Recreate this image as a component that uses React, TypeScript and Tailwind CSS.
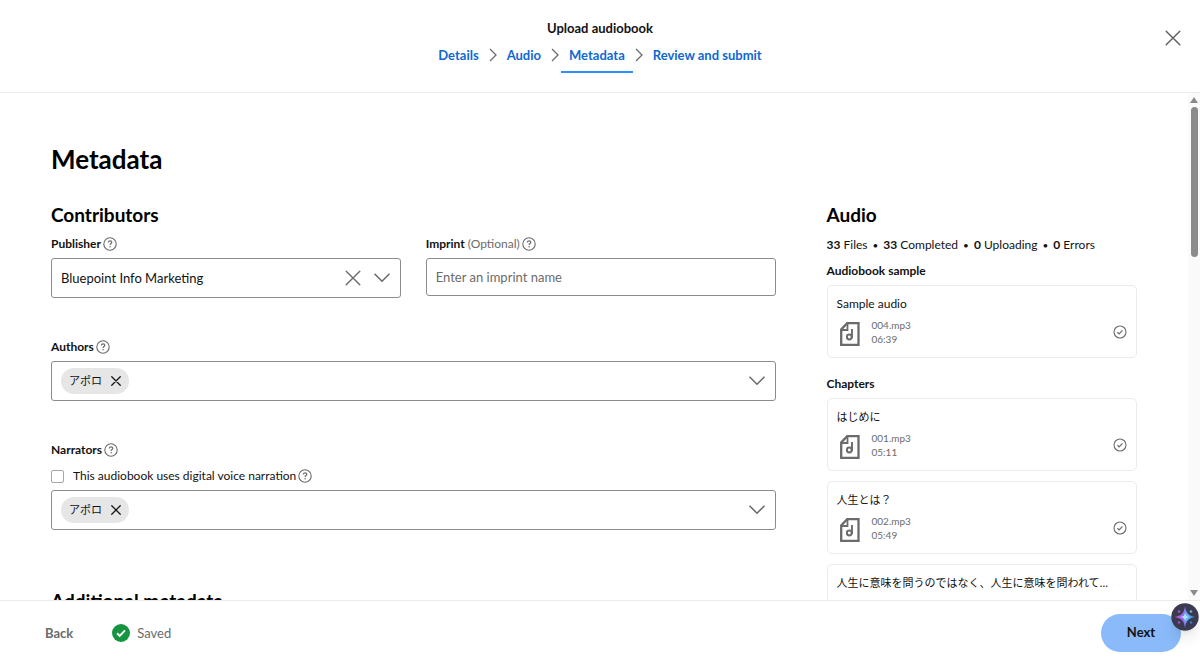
import { useState } from 'react'
import type { ReactNode } from 'react'

type Track = { title: string; file: string; duration: string }

const steps = ['Details', 'Audio', 'Metadata', 'Review and submit']

const stats = [
  { count: 33, label: 'Files' },
  { count: 33, label: 'Completed' },
  { count: 0, label: 'Uploading' },
  { count: 0, label: 'Errors' },
]

const sample: Track = { title: 'Sample audio', file: '004.mp3', duration: '06:39' }

const chapters: Track[] = [
  { title: 'はじめに', file: '001.mp3', duration: '05:11' },
  { title: '人生とは？', file: '002.mp3', duration: '05:49' },
  { title: '人生に意味を問うのではなく、人生に意味を問われていると考えてみる', file: '003.mp3', duration: '07:24' },
]

function CloseIcon({ className }: { className: string }) {
  return (
    <svg viewBox="0 0 16 16" fill="none" stroke="currentColor" strokeLinecap="round" className={className} aria-hidden="true">
      <path d="M1.2 1.2l13.6 13.6M14.8 1.2L1.2 14.8" />
    </svg>
  )
}

function ChevronDownIcon() {
  return (
    <svg viewBox="0 0 16 10" fill="none" stroke="currentColor" strokeWidth="1.6" strokeLinecap="round" className="h-[10px] w-4" aria-hidden="true">
      <path d="M1 1.2l7 7 7-7" />
    </svg>
  )
}

function HelpButton({ label }: { label: string }) {
  return (
    <button type="button" aria-label={label} className="text-[#6b6b6b]">
      <svg viewBox="0 0 14 14" fill="none" stroke="currentColor" className="size-[14px]" aria-hidden="true">
        <circle cx="7" cy="7" r="6.2" strokeWidth="1.1" />
        <path d="M5.3 5.5c.1-1 .8-1.6 1.8-1.6s1.7.6 1.7 1.5c0 1.2-1.7 1.2-1.7 2.5" strokeWidth="1.2" />
        <circle cx="7.1" cy="9.7" r=".75" fill="currentColor" stroke="none" />
      </svg>
    </button>
  )
}

function FieldLabel({ id, help, children }: { id: string; help: string; children: ReactNode }) {
  return (
    <div className="flex h-4 items-center gap-0.5">
      <label htmlFor={id} className="text-xs leading-4 font-bold">
        {children}
      </label>
      <HelpButton label={help} />
    </div>
  )
}

function PeoplePicker({ id, label }: { id: string; label: string }) {
  const [people, setPeople] = useState(['アポロ'])

  return (
    <div className="mt-[6px] flex h-10 items-center rounded-[3px] border border-[#8c8c8c] pr-[10px] pl-[9px]">
      {people.map((name) => (
        <span key={name} className="flex h-[26px] items-center gap-[9px] rounded-full bg-[#e6e6e6] px-2 text-[11px] leading-4">
          {name}
          <button type="button" aria-label={`Remove ${name}`} onClick={() => setPeople(people.filter((p) => p !== name))}>
            <CloseIcon className="size-[10px] stroke-2" />
          </button>
        </span>
      ))}
      <input id={id} type="text" className="min-w-0 flex-1 px-2 text-[13px] outline-none" />
      <button type="button" aria-label={`Show ${label}`} className="text-[#6b6b6b]">
        <ChevronDownIcon />
      </button>
    </div>
  )
}

function TrackCard({ track, titleClass }: { track: Track; titleClass: string }) {
  return (
    <li className="rounded-[5px] border border-[#ebebeb] px-[9px] pt-[10px] pb-[11px]">
      <p className={`truncate pr-3 leading-4 ${titleClass}`}>{track.title}</p>
      <div className="mt-[6px] flex items-center">
        <svg viewBox="0 0 20 24" fill="none" stroke="#6b6b6b" strokeWidth="2.3" className="ml-[3px] h-6 w-5 self-end" aria-hidden="true">
          <path d="M1.2 7.5v15.3h17.3V1.2H7.2z" />
          <path d="M1.2 8h6.3V1.2" strokeWidth="1.8" />
          <circle cx="9.3" cy="15" r="2.4" strokeWidth="2" />
          <path d="M12 16V7" strokeWidth="1.9" />
        </svg>
        <p className="ml-3 text-[10px] leading-[14px] text-[#6b6b6b]">
          {track.file}
          <br />
          {track.duration}
        </p>
        <svg viewBox="0 0 14 14" fill="none" stroke="#6b6b6b" className="ml-auto size-[14px]" role="img" aria-label="Completed">
          <circle cx="7" cy="7" r="6" strokeWidth="1.1" />
          <path d="M4.4 7.3l1.7 1.6 3.4-3.5" strokeWidth="1.2" />
        </svg>
      </div>
    </li>
  )
}

function Header() {
  return (
    <header className="flex h-[93px] shrink-0 items-start border-b border-[#ebebeb] px-[19px]">
      <div className="w-4" />
      <div className="flex flex-1 flex-col items-center pt-[18px]">
        <p className="text-[13px] leading-5 font-bold">Upload audiobook</p>
        <nav aria-label="Progress" className="mt-[5px] flex">
          {steps.map((step, i) => (
            <div key={step} className="flex">
              {i > 0 && (
                <svg viewBox="0 0 8 14" fill="none" stroke="#6b6b6b" strokeWidth="1.3" className="mx-0.5 mt-[5px] h-[14px] w-2" aria-hidden="true">
                  <path d="M1 1l6 6-6 6" />
                </svg>
              )}
              <a
                href="#"
                aria-current={step === 'Metadata' ? 'step' : undefined}
                className="h-[30px] border-b-2 border-transparent px-2 text-[13px] leading-6 font-bold text-[#0f68d2] aria-[current=step]:border-[#2e8fff]"
              >
                {step}
              </a>
            </div>
          ))}
        </nav>
      </div>
      <button type="button" aria-label="Close" className="mt-[30px] text-[#5c5c5c]">
        <CloseIcon className="size-4 stroke-[1.4]" />
      </button>
    </header>
  )
}

function Footer() {
  return (
    <footer className="relative flex h-[65px] shrink-0 items-center border-t border-[#ebebeb] pr-[19px] pl-[45px]">
      <button type="button" className="text-[13px] leading-5 font-bold text-[#6b6b6b]">
        Back
      </button>
      <p className="ml-[39px] flex items-center gap-[7px] text-[13px] leading-5 text-[#6b6b6b]" role="status">
        <svg viewBox="0 0 18 18" className="size-[18px]" aria-hidden="true">
          <circle cx="9" cy="9" r="9" fill="#169440" />
          <path d="M5 9.3l2.7 2.5L13 6.3" fill="none" stroke="#fff" strokeWidth="1.9" />
        </svg>
        Saved
      </p>
      <button type="button" className="ml-auto h-[38px] w-20 rounded-full bg-[#8abaf9] text-[13px] font-bold">
        Next
      </button>
      <button type="button" aria-label="Assistant" className="absolute top-[2px] right-[1px] rounded-full shadow-lg">
        <svg viewBox="0 0 28 28" className="size-7" aria-hidden="true">
          <defs>
            <linearGradient id="spark" x1="0" y1="0.5" x2="1" y2="0.5">
              <stop offset="0" stopColor="#e24be0" />
              <stop offset="0.45" stopColor="#8d6df0" />
              <stop offset="0.6" stopColor="#63b9f2" />
              <stop offset="1" stopColor="#2a7fc4" />
            </linearGradient>
          </defs>
          <circle cx="14" cy="14" r="13.7" fill="#3a3a50" />
          <path d="M14 3c.8 7 3.5 10 10.5 11-7 1-9.7 4-10.5 11-.8-7-3.5-10-10.5-11 7-1 9.7-4 10.5-11z" fill="url(#spark)" />
          <path d="M14 9.5c.5 3 1.5 4 4.5 4.5-3 .5-4 1.5-4.5 4.5-.5-3-1.5-4-4.5-4.5 3-.5 4-1.5 4.5-4.5z" fill="#a9e3fb" />
          <circle cx="8" cy="8.5" r="1.2" fill="#b04fd0" />
          <circle cx="20" cy="8.5" r="1.3" fill="#6fb5c8" />
          <circle cx="8" cy="19.5" r="1.2" fill="#9a4fd8" />
          <circle cx="20" cy="19.5" r="1.2" fill="#3f74c8" />
        </svg>
      </button>
    </footer>
  )
}

export default function App() {
  const [publisher, setPublisher] = useState('Bluepoint Info Marketing')

  return (
    <div className="flex h-screen flex-col bg-white font-[Lato,'Noto_Sans_CJK_JP',sans-serif] text-[#121212]">
      <Header />

      <div className="flex min-h-0 flex-1">
        <main className="min-w-0 flex-1 overflow-y-auto px-[51px] pt-[50px] [scrollbar-width:none]">
          <h1 className="text-[26px] leading-8 font-bold text-black">Metadata</h1>

          <div className="mt-7 grid grid-cols-[7fr_3fr] gap-[51px]">
            <form className="min-w-0">
              <h2 className="text-[19px] leading-6 font-bold text-black">Contributors</h2>

              <div className="mt-[9px] grid grid-cols-2 gap-[25px]">
                <div>
                  <FieldLabel id="publisher" help="About publisher">
                    Publisher
                  </FieldLabel>
                  <div className="mt-[6px] flex h-10 items-center rounded-[3px] border border-[#8c8c8c] pr-[10px] pl-[9px]">
                    <select
                      id="publisher"
                      value={publisher}
                      onChange={(e) => setPublisher(e.target.value)}
                      className="min-w-0 flex-1 appearance-none bg-transparent text-[13px] leading-5 outline-none"
                    >
                      <option value=""></option>
                      <option>Bluepoint Info Marketing</option>
                    </select>
                    <button type="button" aria-label="Clear publisher" onClick={() => setPublisher('')} className="mr-[13px] text-[#6b6b6b]">
                      <CloseIcon className="size-4 stroke-[1.4]" />
                    </button>
                    <span className="text-[#6b6b6b]">
                      <ChevronDownIcon />
                    </span>
                  </div>
                </div>

                <div>
                  <FieldLabel id="imprint" help="About imprint">
                    Imprint <span className="font-normal text-[#6b6b6b]">(Optional)</span>
                  </FieldLabel>
                  <input
                    id="imprint"
                    type="text"
                    placeholder="Enter an imprint name"
                    className="mt-[6px] h-[38px] w-full rounded-[3px] border border-[#8c8c8c] px-[9px] text-[13px] leading-5 outline-none placeholder:text-[#6b6b6b]"
                  />
                </div>
              </div>

              <div className="mt-[41px]">
                <FieldLabel id="authors" help="About authors">
                  Authors
                </FieldLabel>
                <PeoplePicker id="authors" label="authors" />
              </div>

              <div className="mt-[41px]">
                <FieldLabel id="narrators" help="About narrators">
                  Narrators
                </FieldLabel>
                <div className="mt-[10px] flex h-4 items-center">
                  <input
                    id="digital-voice"
                    type="checkbox"
                    className="size-[13px] appearance-none rounded-[2px] border border-[#a6a6a6] checked:bg-[#0f68d2]"
                  />
                  <label htmlFor="digital-voice" className="mr-0.5 ml-[9px] text-xs leading-4">
                    This audiobook uses digital voice narration
                  </label>
                  <HelpButton label="About digital voice narration" />
                </div>
                <PeoplePicker id="narrators" label="narrators" />
              </div>

              <h2 className="mt-[59px] mb-10 text-[19px] leading-6 font-bold text-black">Additional metadata</h2>
            </form>

            <aside className="min-w-0">
              <h2 className="text-[19px] leading-6 font-bold text-black">Audio</h2>
              <p className="mt-[10px] flex text-xs leading-4 whitespace-nowrap">
                {stats.map((stat, i) => (
                  <span key={stat.label}>
                    {i > 0 && <span className="mx-[5px] text-[10px]">•</span>}
                    <b>{stat.count}</b> {stat.label}
                  </span>
                ))}
              </p>

              <h3 className="mt-[10px] text-xs leading-4 font-bold">Audiobook sample</h3>
              <ul className="mt-[6px]">
                <TrackCard track={sample} titleClass="text-xs" />
              </ul>

              <h3 className="mt-[18px] text-xs leading-4 font-bold">Chapters</h3>
              <ul className="mt-[6px] flex flex-col gap-[10px]">
                {chapters.map((track) => (
                  <TrackCard key={track.file} track={track} titleClass="text-[11px]" />
                ))}
              </ul>
            </aside>
          </div>
        </main>

        {/* Scrollbar */}
        <div className="flex w-3 shrink-0 flex-col items-center bg-[#fafafa] py-1" aria-hidden="true">
          <svg viewBox="0 0 8 6" className="h-[6px] w-2 fill-[#8b8b8b]">
            <path d="M4 0l4 6H0z" />
          </svg>
          <div className="mt-1 h-[30%] w-[7px] rounded-full bg-[#8b8b8b]" />
          <svg viewBox="0 0 8 6" className="mt-auto h-[6px] w-2 fill-[#8b8b8b]">
            <path d="M4 6l4-6H0z" />
          </svg>
        </div>
      </div>

      <Footer />
    </div>
  )
}
